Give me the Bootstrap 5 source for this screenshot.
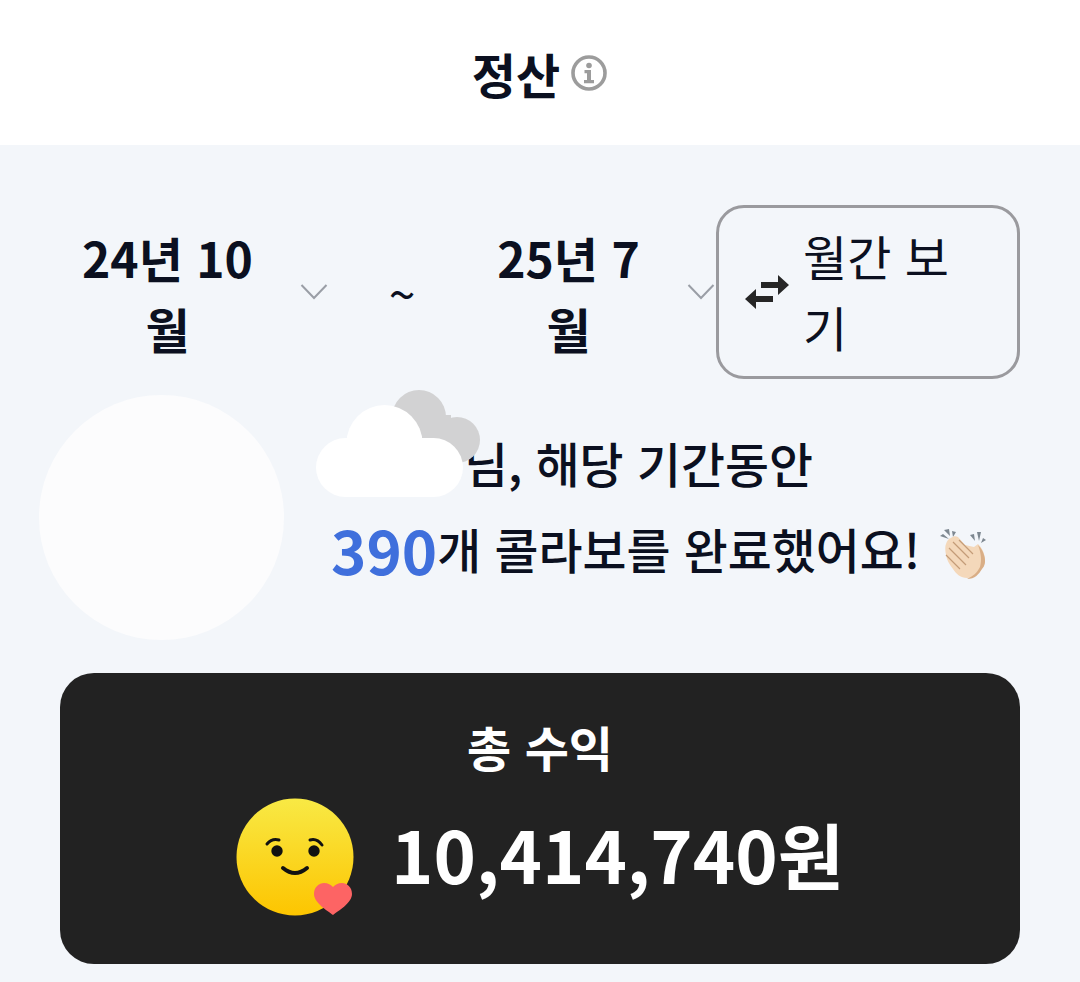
<!doctype html>
<html lang="ko">
<head>
<meta charset="utf-8">
<title>정산</title>
<link href="https://cdn.jsdelivr.net/npm/bootstrap@5.3.0/dist/css/bootstrap.min.css" rel="stylesheet">
<style>
html,body{height:100%}
body{background:#f3f6fa;color:#0b1020;font-family:"Noto Sans CJK KR","Noto Sans",sans-serif;overflow:hidden}
.top-head{height:145px;background:#fff;gap:10px}
.top-title{font-size:48px;font-weight:700;line-height:1}
.range-row{padding:60px 60px 0 72px;height:233px}
.date-pick{font-size:48px;font-weight:700;line-height:71px;text-align:center;margin-top:17px}
.date-one{width:191px}
.date-two{width:171px;margin-left:57px}
.chev-one{width:28px;margin:78px 0 0 37px}
.chev-two{width:28px;margin:78px 0 0 33px}
.tilde{font-size:48px;width:48px;text-align:center;line-height:1;margin:63px 0 0 50px}
.mode-btn{width:304px;height:174px;margin-left:1px;border:3px solid #9a9a9e;border-radius:28px;padding:0 0 0 25px;font-size:48px;line-height:71px;gap:13px}
.mode-text{width:175px;text-align:left;margin-bottom:3px}
.intro-row{padding-left:39px;height:295px}
.avatar-disc{width:245px;height:245px;border-radius:50%;background:#fcfcfd;flex:none;margin-top:17px}
.intro-text{margin:42px 0 0 47px;position:relative;font-size:47.8px;font-weight:500;line-height:86px;white-space:nowrap}
.name-gap{display:inline-block;width:133px}
.big-num{color:#3f6fdc;font-size:60px;font-weight:700;line-height:1}
.clap-pic{margin-left:5px;margin-top:9px}
.cloud-over{position:absolute;left:-15px;top:-35px;width:166px;height:115px}
.total-card{margin:0 60px;height:291px;background:#222;border-radius:34px;color:#fff}
.total-label{font-size:48px;font-weight:700;line-height:1;margin-top:49px}
.total-row{margin-top:28px;gap:37px}
.total-value{font-size:72px;font-weight:700;line-height:1;padding-bottom:8px}
</style>
</head>
<body>
<header class="top-head d-flex align-items-center justify-content-center">
  <span class="top-title">정산</span>
  <svg width="38" height="38" viewBox="0 0 38 38" aria-hidden="true"><circle cx="19" cy="19" r="16" fill="none" stroke="#9c9c9c" stroke-width="3.6"/><circle cx="19" cy="11.5" r="2.8" fill="#9c9c9c"/><path d="M14.5 16h6.500v10h3v3.200h-10V26h3v-6.800h-2.500z" fill="#9c9c9c"/></svg>
</header>
<section class="range-row d-flex align-items-start">
  <div class="date-pick date-one">24년 10월</div>
  <div class="chev-one"><svg class="d-block" width="28" height="17" viewBox="0 0 28 17" aria-hidden="true"><path d="M1.500 2L14 15 26.500 2" fill="none" stroke="#9a9ea6" stroke-width="2"/></svg></div>
  <div class="tilde">~</div>
  <div class="date-pick date-two">25년 7월</div>
  <div class="chev-two"><svg class="d-block" width="28" height="17" viewBox="0 0 28 17" aria-hidden="true"><path d="M1.500 2L14 15 26.500 2" fill="none" stroke="#9a9ea6" stroke-width="2"/></svg></div>
  <div class="mode-btn d-flex align-items-center">
    <svg width="46" height="36" viewBox="0 0 46 36" class="flex-shrink-0" aria-hidden="true"><path d="M17 8h17V1l11 10-11 10v-7H17z" fill="#262626"/><path d="M29 22H12v-7L1 25l11 10v-7h17z" fill="#262626"/></svg>
    <span class="mode-text">월간 보기</span>
  </div>
</section>
<section class="intro-row d-flex align-items-start">
  <div class="avatar-disc"></div>
  <div class="intro-text">
    <svg class="cloud-over" viewBox="0 0 166 115" aria-hidden="true">
      <circle cx="103" cy="32" r="27" fill="#d2d2d3"/><circle cx="141" cy="55" r="23" fill="#d2d2d3"/>
      <path d="M85 30h50v30l-5 20H85z" fill="#d2d2d3"/>
      <circle cx="68.500" cy="58" r="38" fill="#fff"/>
      <rect x="0" y="53" width="147" height="59" rx="29.500" fill="#fff"/>
    </svg>
    <div><span class="name-gap"></span>님, 해당 기간동안</div>
    <div class="d-flex align-items-center"><span class="big-num">390</span><span>개 콜라보를 완료했어요!</span>
      <svg class="clap-pic" width="70" height="65" viewBox="0 0 70 65" aria-hidden="true">
        <path d="M15 15l3-2 6 5zM19 9l5-1 1 7zM27 10l4 1-3 5zM45 14l4-1 1 7zM52 11l4 0-2 9zM58 17l3 2-5 3z" fill="#7d8790"/>
        <path d="M21 23c1-3 3-6 5-6 2-2 5-2 7-1l7 8 9 2 4-3c3 3 5 6 6 10 2 6 1 11-2 14-3 5-7 10-15 10-6 0-11-4-14-9-3-4-6-8-7-14-1-5-1-9 0-11z" fill="#f4d8ba"/>
        <path d="M24 27l17 17M28 21l16 16M34 19l14 14M21 34l14 14" stroke="#c49c78" stroke-width="1.200" fill="none"/>
        <path d="M53 24c3 3 5 6 6 10 2 6 1 11-2 14-3 5-7 10-15 10 6-3 10-6 13-12 2-7 1-14-2-22z" fill="#d9ae86"/>
      </svg>
    </div>
  </div>
</section>
<section class="total-card d-flex flex-column align-items-center">
  <div class="total-label">총 수익</div>
  <div class="total-row d-flex align-items-center">
    <svg width="118" height="118" viewBox="0 0 118 118" aria-hidden="true">
      <defs><linearGradient id="faceFill" x1="0" y1="0" x2="0" y2="1"><stop offset="0" stop-color="#f8e945"/><stop offset="1" stop-color="#fdc500"/></linearGradient></defs>
      <circle cx="59" cy="59" r="58.500" fill="url(#faceFill)"/>
      <circle cx="41" cy="53" r="5.700" fill="#111"/><circle cx="78" cy="53" r="5.700" fill="#111"/>
      <path d="M31 46q5-6 12-4M74 42q7-2 12 5" stroke="#111" stroke-width="3" fill="none" stroke-linecap="round"/>
      <path d="M47 70q12 10 24 0" stroke="#111" stroke-width="4" fill="none" stroke-linecap="round"/>
      <path d="M97 117C92 113 78 105 78 96C78 89 83 85 88 85C92 85 95 87 97 89C99 87 102 85 106 85C111 85 116 89 116 96C116 105 102 113 97 117z" fill="#fd6464"/>
    </svg>
    <div class="total-value">10,414,740원</div>
  </div>
</section>
</body>
</html>
